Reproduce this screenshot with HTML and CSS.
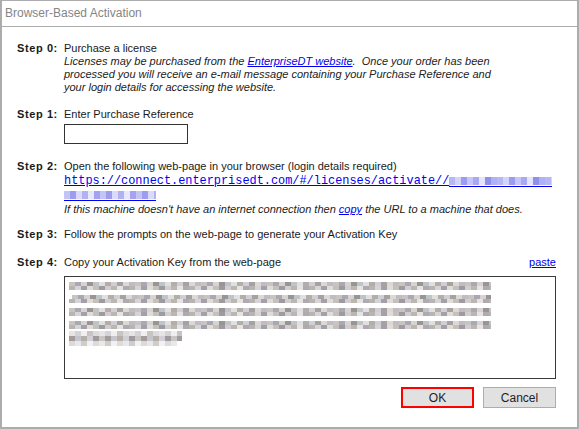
FILE: index.html
```html
<!DOCTYPE html>
<html>
<head>
<meta charset="utf-8">
<title>Browser-Based Activation</title>
<link rel="stylesheet" href="styles.css">
</head>
<body>
<div class="window">
  <div class="titlebar">Browser-Based Activation</div>
  <div class="content">
    <div class="step step0">
      <div class="label">Step 0:</div>
      <div class="body">
        <div class="line">Purchase a license</div>
        <div class="note">
          <div class="line">Licenses may be purchased from the <a class="link">EnterpriseDT website</a>.&nbsp; Once your order has been</div>
          <div class="line">processed you will receive an e-mail message containing your Purchase Reference and</div>
          <div class="line">your login details for accessing the website.</div>
        </div>
      </div>
    </div>

    <div class="step step1">
      <div class="label">Step 1:</div>
      <div class="body">
        <div class="line">Enter Purchase Reference</div>
        <div class="input"></div>
      </div>
    </div>

    <div class="step step2">
      <div class="label">Step 2:</div>
      <div class="body">
        <div class="line">Open the following web-page in your browser (login details required)</div>
        <div class="url"><a class="urllink">https://connect.enterprisedt.com/#/licenses/activate//</a><span class="blur-blue b1"></span></div>
        <div class="url url2"><span class="blur-blue b2"></span></div>
        <div class="line note note2">If this machine doesn't have an internet connection then <a class="link">copy</a> the URL to a machine that does.</div>
      </div>
    </div>

    <div class="step step3">
      <div class="label">Step 3:</div>
      <div class="body">
        <div class="line">Follow the prompts on the web-page to generate your Activation Key</div>
      </div>
    </div>

    <div class="step step4">
      <div class="label">Step 4:</div>
      <div class="body">
        <div class="line row4"><span>Copy your Activation Key from the web-page</span><a class="link">paste</a></div>
        <div class="keybox">
          <div class="krow k1"></div>
          <div class="krow k2"></div>
          <div class="krow k3"></div>
          <div class="krow k4"></div>
          <div class="krow k5"></div>
        </div>
      </div>
    </div>

    <div class="buttons">
      <div class="btn ok">OK</div>
      <div class="btn cancel">Cancel</div>
    </div>
  </div>
</div>
</body>
</html>
```
FILE: styles.css
```css
html, body {
  margin: 0;
  padding: 0;
  background: #ffffff;
}
body {
  font-family: "Liberation Sans", Arial, sans-serif;
  font-size: 11px;
  color: #1a1a1a;
}
.window {
  width: 579px;
  height: 429px;
  box-sizing: border-box;
  border-top: 1px solid #acacac;
  border-left: 2px solid #acacac;
  border-right: 2px solid #acacac;
  border-bottom: 2px solid #acacac;
  background: #ffffff;
  display: flex;
  flex-direction: column;
}
.titlebar {
  border-bottom: 1px solid #acacac;
  box-sizing: border-box;
  height: 26px;
  padding-left: 3px;
  font-size: 12px;
  line-height: 25px;
  color: #858585;
}
.content {
  padding: 15px 21px 0 15px;
  display: flex;
  flex-direction: column;
}
.step {
  display: grid;
  grid-template-columns: 47px 1fr;
}
.label {
  font-weight: bold;
  line-height: 13px;
  letter-spacing: 0.6px;
  color: #1a1a1a;
}
.line {
  line-height: 13px;
  white-space: nowrap;
}
.note {
  font-style: italic;
  color: #222;
}
.link {
  color: #0000ee;
  text-decoration: underline;
}
.step1 { margin-top: 14px; }
.input {
  margin-top: 3px;
  width: 124px;
  height: 20px;
  box-sizing: border-box;
  border: 1px solid #333;
}
.step2 { margin-top: 16px; }
.url {
  margin-top: 1px;
  height: 14px;
  line-height: 14px;
  white-space: nowrap;
  font-family: "Liberation Mono", "Courier New", monospace;
  font-size: 11.9px;
  display: flex;
  align-items: flex-start;
}
.url2 { margin-top: 0; }
.urllink {
  color: #0000ee;
  text-decoration: underline;
}
.blur-blue {
  display: block;
  height: 12px;
  margin-top: 2px;
}
.b1 {
  width: 103px;
  background:
    repeating-linear-gradient(90deg,
      #b7b7f3 0 6px, #d4d4fa 6px 12px, #9b9bef 12px 18px, #c6c6f8 18px 24px,
      #a9a9f2 24px 30px, #e4e4fc 30px 36px, #8f8fec 36px 42px, #b0b0f4 42px 48px) 0 1px / 100% 8px no-repeat,
    linear-gradient(#0000ee, #0000ee) 0 10px / 100% 1px no-repeat;
}
.b2 {
  width: 92px;
  background:
    repeating-linear-gradient(90deg,
      #c4c4f7 0 6px, #9d9df0 6px 12px, #dadafb 12px 18px, #b1b1f4 18px 24px,
      #e8e8fd 24px 30px, #a3a3f1 30px 36px) 0 1px / 100% 8px no-repeat,
    linear-gradient(#0000ee, #0000ee) 0 10px / 100% 1px no-repeat;
}
.note2 {
  margin-top: 1px;
}
.step3 { margin-top: 12px; }
.step4 { margin-top: 15px; }
.row4 {
  display: flex;
  justify-content: space-between;
}
.keybox {
  margin-top: 7px;
  height: 103px;
  box-sizing: border-box;
  border: 1px solid #3a3a3a;
  padding: 5px 0 0 4px;
  display: flex;
  flex-direction: column;
}
.krow {
  height: 8px;
  width: 422px;
  margin-bottom: 5px;
  background:
    repeating-linear-gradient(90deg,
      #c9c3c3 0 6px, #a9a9b3 6px 12px, #d8d3d0 12px 18px, #9a9595 18px 24px,
      #bfc4c9 24px 30px, #e2e0de 30px 36px, #b3aea8 36px 42px, #cfcfd6 42px 48px,
      #a5a2a0 48px 54px, #dcd8d5 54px 60px, #c1bcc2 60px 66px) 0 0 / 100% 4px no-repeat,
    repeating-linear-gradient(90deg,
      #b8b4b2 0 6px, #d6d4d8 6px 12px, #a3a0a8 12px 18px, #e0dcd8 18px 24px,
      #c4c0bc 24px 30px, #9d9aa0 30px 36px, #d1cdd0 36px 42px, #bab6b0 42px 48px,
      #e6e4e2 48px 54px, #aeaab0 54px 60px) 0 4px / 100% 4px no-repeat;
}
.k2 { background-position: 3px 0, 0 4px; }
.k4 { margin-bottom: 2px; }
.k5 {
  width: 113px;
  height: 15px;
  background:
    repeating-linear-gradient(90deg,
      #e8e4e6 0 6px, #d2d4d8 6px 12px, #f0eeee 12px 18px, #c8c4c6 18px 24px,
      #dcdcdc 24px 30px) 0 0 / 100% 5px no-repeat,
    repeating-linear-gradient(90deg,
      #a29c9c 0 6px, #c6c4cc 6px 12px, #b4b0a8 12px 18px, #d0d0d6 18px 24px,
      #9e9a9e 24px 30px, #c8c6c2 30px 36px) 0 5px / 100% 5px no-repeat,
    repeating-linear-gradient(90deg,
      #dedad8 0 6px, #e8e8ec 6px 12px, #d0ccca 12px 18px, #f2f0f0 18px 24px) 0 10px / 96% 5px no-repeat;
}
.buttons {
  margin-top: 8px;
  display: flex;
  justify-content: flex-end;
  gap: 9px;
}
.btn {
  width: 73px;
  height: 21px;
  box-sizing: border-box;
  background: #e1e1e1;
  border: 1px solid #adadad;
  font-size: 12px;
  color: #1e1e1e;
  display: flex;
  align-items: center;
  justify-content: center;
}
.ok {
  border: 2px solid #ff0000;
}
```
